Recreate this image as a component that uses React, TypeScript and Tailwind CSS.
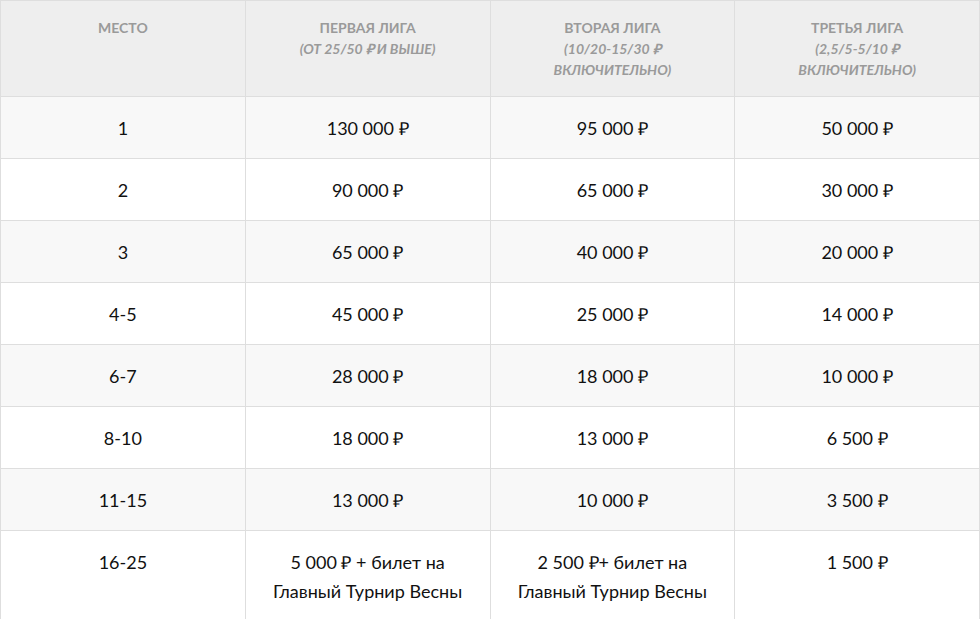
const rows: [string, string, string, string][] = [
    ['1', '130 000 ₽', '95 000 ₽', '50 000 ₽'],
    ['2', '90 000 ₽', '65 000 ₽', '30 000 ₽'],
    ['3', '65 000 ₽', '40 000 ₽', '20 000 ₽'],
    ['4-5', '45 000 ₽', '25 000 ₽', '14 000 ₽'],
    ['6-7', '28 000 ₽', '18 000 ₽', '10 000 ₽'],
    ['8-10', '18 000 ₽', '13 000 ₽', '6 500 ₽'],
    ['11-15', '13 000 ₽', '10 000 ₽', '3 500 ₽'],
    [
        '16-25',
        '5 000 ₽ + билет на Главный Турнир Весны',
        '2 500 ₽+ билет на Главный Турнир Весны',
        '1 500 ₽',
    ],
];

const headers: [string, string | null][] = [
    ['Место', null],
    ['Первая лига', '(от 25/50 ₽ и выше)'],
    ['Вторая лига', '(10/20-15/30 ₽ включительно)'],
    ['Третья лига', '(2,5/5-5/10 ₽ включительно)'],
];

export default function App() {
    return (
        <div className="min-h-screen bg-white font-['Lato','Liberation_Sans',sans-serif]">
            <table className="w-[980px] table-fixed border-collapse">
                <thead>
                    <tr className="bg-[#eeeeee]">
                        {headers.map(([title, sub]) => (
                            <th
                                key={title}
                                className="border border-[#dedede] px-10 pt-[16px] pb-[16px] align-top text-[14px] leading-[21px] font-bold text-[#9a9a9a] uppercase"
                            >
                                <div>{title}</div>
                                {sub && <div className="italic">{sub}</div>}
                                {!sub && <div className="h-[42px]" />}
                            </th>
                        ))}
                    </tr>
                </thead>
                <tbody>
                    {rows.map((row, i) => (
                        <tr
                            key={row[0]}
                            className={i % 2 === 0 ? 'bg-[#f8f8f8]' : 'bg-white'}
                        >
                            {row.map((cell, j) => (
                                <td
                                    key={j}
                                    className="border border-[#dedede] px-5 pt-[17px] pb-[15px] text-center align-top text-[18px] leading-[29px] text-[#111]"
                                >
                                    {cell}
                                </td>
                            ))}
                        </tr>
                    ))}
                </tbody>
            </table>
        </div>
    );
}
